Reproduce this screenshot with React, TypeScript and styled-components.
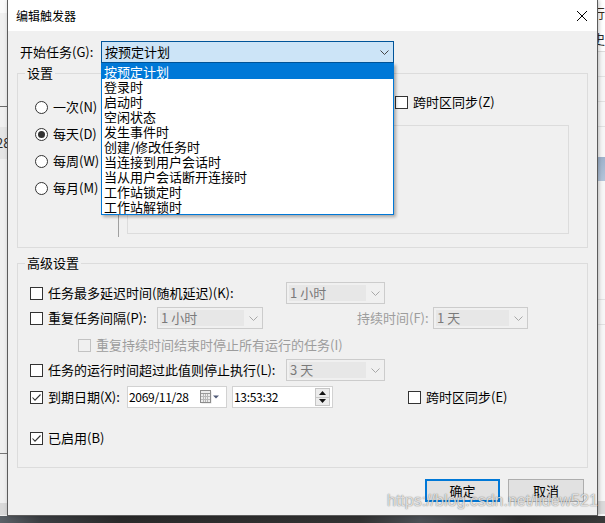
import React from "react";
import styled, { createGlobalStyle } from "styled-components";

const FONT = `"Noto Sans CJK SC", "Noto Sans", sans-serif`;

const GlobalStyle = createGlobalStyle`
  html, body { margin: 0; padding: 0; background: #2b2b2b; }
  body { font-family: ${FONT}; font-size: 13px; color: #000; }
  #root { width: 605px; height: 523px; }
  *, *::before, *::after { box-sizing: border-box; }
`;

const Desktop = styled.div`
  width: 605px;
  height: 523px;
  display: grid;
  grid-template-columns: 7px 591px 7px;
  grid-template-rows: 516px 7px;
  overflow: hidden;
  background: #2b2b2b;
`;

const SideStrip = styled.div<{ $side: "left" | "right" }>`
  grid-row: 1;
  grid-column: ${(p) => (p.$side === "left" ? 1 : 3)};
  display: flex;
  flex-direction: column;
  overflow: hidden;
  background: ${(p) => (p.$side === "left" ? "#f0f0f0" : "#f7f7f7")};
`;

const StripBand = styled.div<{ $h: number; $bg?: string; $line?: string }>`
  flex: 0 0 ${(p) => p.$h}px;
  background: ${(p) => p.$bg || "transparent"};
  border-bottom: ${(p) => (p.$line ? `1px solid ${p.$line}` : "none")};
  font-size: 13px;
  line-height: ${(p) => p.$h}px;
  white-space: nowrap;
  overflow: hidden;
`;

const Peek = styled.span<{ $shift: number; $color?: string }>`
  display: inline-block;
  margin-left: ${(p) => p.$shift}px;
  color: ${(p) => p.$color || "#2a2a2a"};
`;

const BottomStrip = styled.div`
  grid-row: 2;
  grid-column: 1 / -1;
  background: linear-gradient(
    90deg,
    #5b6167 0,
    #3b3e42 40px,
    #2a2a2a 120px,
    #323232 360px,
    #4c5055 420px,
    #2c2c2c 520px,
    #3a3a3a 605px
  );
`;

const Dialog = styled.div`
  grid-row: 1;
  grid-column: 2;
  position: relative;
  display: flex;
  flex-direction: column;
  background: #f0f0f0;
  border: 1px solid #5c5c5c;
  border-top: none;
  box-shadow: 1px 0 4px rgba(0, 0, 0, 0.25);
`;

const TitleBar = styled.div`
  flex: 0 0 31px;
  display: flex;
  align-items: center;
  justify-content: space-between;
  background: #fff;
  padding-left: 8px;
`;

const Title = styled.span`
  font-size: 12px;
  line-height: 16px;
`;

const CloseBtn = styled.span`
  display: flex;
  margin-right: 10px;
  margin-top: 1px;
`;

const Body = styled.div`
  flex: 1;
  display: flex;
  flex-direction: column;
  padding: 10px 9px 0;
`;

const StartRow = styled.div`
  position: relative;
  z-index: 2;
  display: flex;
  align-items: center;
  height: 22px;
  padding-left: 3px;
`;

const FieldLabel = styled.span<{ $w?: number; $disabled?: boolean; $ml?: number }>`
  flex: 0 0 ${(p) => (p.$w ? `${p.$w}px` : "auto")};
  margin-left: ${(p) => p.$ml || 0}px;
  white-space: nowrap;
  color: ${(p) => (p.$disabled ? "#9d9d9d" : "#000")};
  font-size: 13px;
  line-height: 16px;
`;

const ActiveCombo = styled.div`
  position: relative;
  width: 293px;
  height: 22px;
  display: flex;
  align-items: center;
  justify-content: space-between;
  padding: 0 4px 0 3px;
  background: #cce4f7;
  border: 1px solid #005499;
  font-size: 13px;
  line-height: 16px;
`;

const DropList = styled.ul`
  position: absolute;
  left: -1px;
  top: calc(100% + 1px);
  width: 293px;
  margin: 0;
  padding: 0;
  list-style: none;
  background: #fff;
  border: 1px solid #0078d7;
  box-shadow: 2px 2px 3px rgba(0, 0, 0, 0.3);
`;

const DropItem = styled.li<{ $selected?: boolean }>`
  height: 15px;
  line-height: 15px;
  padding-left: 2px;
  font-size: 13px;
  white-space: nowrap;
  background: ${(p) => (p.$selected ? "#0078d7" : "transparent")};
  color: ${(p) => (p.$selected ? "#fff" : "#000")};
`;

const Group = styled.fieldset<{ $mt: number }>`
  margin: ${(p) => p.$mt}px 0 0;
  padding: 0;
  min-width: 0;
  border: 1px solid #dcdcdc;
`;

const GroupLegend = styled.legend`
  margin-left: 7px;
  padding: 0 2px;
  font-size: 13px;
  line-height: 16px;
`;

const SettingsInner = styled.div`
  display: flex;
  align-items: flex-start;
`;

const RadioCol = styled.div`
  flex: 0 0 100px;
  display: flex;
  flex-direction: column;
  gap: 7px;
  padding: 16px 0 0 17px;
`;

const OptionRow = styled.label`
  display: flex;
  align-items: center;
  gap: 5px;
  height: 20px;
  font-size: 13px;
  line-height: 16px;
  white-space: nowrap;
`;

const RadioCircle = styled.span<{ $checked?: boolean }>`
  flex: 0 0 13px;
  width: 13px;
  height: 13px;
  border-radius: 50%;
  border: 1px solid #333;
  background: #fff;
  display: flex;
  align-items: center;
  justify-content: center;
  &::after {
    content: "";
    width: 7px;
    height: 7px;
    border-radius: 50%;
    background: ${(p) => (p.$checked ? "#333" : "transparent")};
  }
`;

const VLine = styled.div`
  flex: 0 0 1px;
  margin-top: 7px;
  height: 149px;
  background: #a0a0a0;
`;

const RightPanel = styled.div`
  flex: 0 0 442px;
  margin-left: 8px;
  display: flex;
  flex-direction: column;
  padding-bottom: 13px;
`;

const PanelTopRow = styled.div`
  margin-top: 11px;
  height: 20px;
  display: flex;
  align-items: center;
  padding-left: 268px;
`;

const InnerBox = styled.div`
  margin-top: 13px;
  height: 109px;
  border: 1px solid #dcdcdc;
`;

const AdvInner = styled.div`
  display: flex;
  flex-direction: column;
  padding: 11px 0 18px 12px;
`;

const Row = styled.div<{ $mt?: number; $indent?: number }>`
  display: flex;
  align-items: center;
  height: 22px;
  margin-top: ${(p) => p.$mt || 0}px;
  padding-left: ${(p) => p.$indent || 0}px;
`;

const CheckGroup = styled.label<{ $ml?: number; $w?: number }>`
  display: flex;
  align-items: center;
  gap: 5px;
  margin-left: ${(p) => p.$ml || 0}px;
  flex: 0 0 ${(p) => (p.$w ? `${p.$w}px` : "auto")};
  white-space: nowrap;
`;

const CheckBoxBox = styled.span<{ $disabled?: boolean }>`
  flex: 0 0 13px;
  width: 13px;
  height: 13px;
  border: 1px solid ${(p) => (p.$disabled ? "#c2c2c2" : "#333")};
  background: ${(p) => (p.$disabled ? "#f0f0f0" : "#fff")};
  display: flex;
  align-items: center;
  justify-content: center;
`;

const DimCombo = styled.div<{ $w: number; $ml?: number }>`
  flex: 0 0 ${(p) => p.$w}px;
  margin-left: ${(p) => p.$ml || 0}px;
  height: 22px;
  border: 1px solid #cccccc;
  background: #f0f0f0;
  display: flex;
  align-items: stretch;
`;

const DimComboText = styled.span`
  flex: 1;
  margin: 2px 0 2px 2px;
  background: #e7e7e7;
  color: #7a7a7a;
  padding-left: 1px;
  font-size: 13px;
  line-height: 16px;
  display: flex;
  align-items: center;
  white-space: nowrap;
`;

const DimChevronBox = styled.span`
  flex: 0 0 18px;
  display: flex;
  align-items: center;
  justify-content: center;
`;

const InputField = styled.div<{ $w: number; $ml?: number; $pr?: number }>`
  flex: 0 0 ${(p) => p.$w}px;
  margin-left: ${(p) => p.$ml || 0}px;
  height: 22px;
  background: #fff;
  border: 1px solid #d2d2d2;
  display: flex;
  align-items: center;
  justify-content: space-between;
  padding: 0 ${(p) => p.$pr ?? 2}px 0 1px;
  white-space: nowrap;
`;

const ValueText = styled.span`
  font-size: 12px;
  line-height: 16px;
  letter-spacing: -0.3px;
`;

const Spinner = styled.span`
  display: flex;
  flex-direction: column;
  width: 15px;
  height: 18px;
`;

const SpinHalf = styled.span`
  flex: 1;
  display: flex;
  align-items: center;
  justify-content: center;
  background: #ececec;
  border: 1px solid #c6c6c6;
  & + & {
    border-top: none;
  }
`;

const ButtonRow = styled.div`
  margin-top: 11px;
  display: flex;
  justify-content: flex-end;
  gap: 8px;
  padding-right: 4px;
`;

const DlgButton = styled.button<{ $w: number; $primary?: boolean }>`
  width: ${(p) => p.$w}px;
  height: 23px;
  padding: 0;
  background: #e1e1e1;
  border: ${(p) => (p.$primary ? "2px solid #0078d7" : "1px solid #adadad")};
  font-family: ${FONT};
  font-size: 13px;
  line-height: 16px;
  color: #000;
`;

const Watermark = styled.span`
  position: absolute;
  left: 379px;
  top: 492px;
  font-family: "Liberation Sans", Arial, sans-serif;
  font-size: 16px;
  line-height: 18px;
  color: rgba(250, 250, 250, 0.8);
  text-shadow: 0 0 1px rgba(0, 0, 0, 0.5), 0 0 2px rgba(0, 0, 0, 0.2);
  white-space: nowrap;
  pointer-events: none;
`;

const Chevron = ({ color }: { color: string }) => (
  <svg width="9" height="5" viewBox="0 0 9 5">
    <polyline points="0.5,0.5 4.5,4.5 8.5,0.5" fill="none" stroke={color} strokeWidth="1" />
  </svg>
);

const CheckMark = () => (
  <svg width="11" height="11" viewBox="0 0 11 11">
    <polyline points="1.5,5.5 4,8.2 9.5,2.5" fill="none" stroke="#333" strokeWidth="1.1" />
  </svg>
);

const CheckBox = ({ checked, disabled }: { checked?: boolean; disabled?: boolean }) => (
  <CheckBoxBox $disabled={disabled}>{checked ? <CheckMark /> : null}</CheckBoxBox>
);

const CalendarIcon = () => (
  <svg width="20" height="14" viewBox="0 0 20 14">
    <rect x="1.5" y="1.5" width="10" height="12" fill="#9a9a9a" opacity="0.35" />
    <rect x="0.5" y="0.5" width="10" height="12" fill="#ececec" stroke="#8c8c8c" />
    <line x1="1" y1="3.5" x2="10" y2="3.5" stroke="#9a9a9a" />
    <line x1="3.5" y1="4" x2="3.5" y2="12" stroke="#b8b8b8" />
    <line x1="5.5" y1="4" x2="5.5" y2="12" stroke="#b8b8b8" />
    <line x1="7.5" y1="4" x2="7.5" y2="12" stroke="#b8b8b8" />
    <line x1="1" y1="6.5" x2="10" y2="6.5" stroke="#b8b8b8" />
    <line x1="1" y1="9.5" x2="10" y2="9.5" stroke="#b8b8b8" />
    <polygon points="13,5.5 19,5.5 16,8.5" fill="#505a77" />
  </svg>
);

const SpinArrow = ({ up }: { up?: boolean }) => (
  <svg width="7" height="4" viewBox="0 0 7 4">
    <polygon points={up ? "0,4 7,4 3.5,0" : "0,0 7,0 3.5,4"} fill="#111" />
  </svg>
);

const triggerItems = [
  "按预定计划",
  "登录时",
  "启动时",
  "空闲状态",
  "发生事件时",
  "创建/修改任务时",
  "当连接到用户会话时",
  "当从用户会话断开连接时",
  "工作站锁定时",
  "工作站解锁时",
];

const radios = [
  { label: "一次(N)", checked: false },
  { label: "每天(D)", checked: true },
  { label: "每周(W)", checked: false },
  { label: "每月(M)", checked: false },
];

export default function App() {
  return (
    <>
      <GlobalStyle />
      <Desktop>
        <SideStrip $side="left">
          <StripBand $h={13} $bg="#fafafa" />
          <StripBand $h={94} $line="#6b6b6b" />
          <StripBand $h={20} />
          <StripBand $h={32} $bg="#e5e5e5">
            <Peek $shift={-4}>28</Peek>
          </StripBand>
          <StripBand $h={295} $line="#777777" />
          <StripBand $h={49} />
          <StripBand $h={12} $bg="#d9d9d9" />
        </SideStrip>

        <Dialog>
          <TitleBar>
            <Title>编辑触发器</Title>
            <CloseBtn>
              <svg width="10" height="10" viewBox="0 0 10 10">
                <line x1="0" y1="0" x2="10" y2="10" stroke="#000" strokeWidth="1" />
                <line x1="10" y1="0" x2="0" y2="10" stroke="#000" strokeWidth="1" />
              </svg>
            </CloseBtn>
          </TitleBar>

          <Body>
            <StartRow>
              <FieldLabel $w={81}>开始任务(G):</FieldLabel>
              <ActiveCombo>
                <span>按预定计划</span>
                <Chevron color="#444" />
                <DropList>
                  {triggerItems.map((t, i) => (
                    <DropItem key={t} $selected={i === 0}>
                      {t}
                    </DropItem>
                  ))}
                </DropList>
              </ActiveCombo>
            </StartRow>

            <Group $mt={2}>
              <GroupLegend>设置</GroupLegend>
              <SettingsInner>
                <RadioCol>
                  {radios.map((r) => (
                    <OptionRow key={r.label}>
                      <RadioCircle $checked={r.checked} />
                      {r.label}
                    </OptionRow>
                  ))}
                </RadioCol>
                <VLine />
                <RightPanel>
                  <PanelTopRow>
                    <CheckGroup>
                      <CheckBox />
                      <FieldLabel>跨时区同步(Z)</FieldLabel>
                    </CheckGroup>
                  </PanelTopRow>
                  <InnerBox />
                </RightPanel>
              </SettingsInner>
            </Group>

            <Group $mt={7}>
              <GroupLegend>高级设置</GroupLegend>
              <AdvInner>
                <Row>
                  <CheckGroup $w={256}>
                    <CheckBox />
                    <FieldLabel>任务最多延迟时间(随机延迟)(K):</FieldLabel>
                  </CheckGroup>
                  <DimCombo $w={99}>
                    <DimComboText>1 小时</DimComboText>
                    <DimChevronBox>
                      <Chevron color="#a8a8a8" />
                    </DimChevronBox>
                  </DimCombo>
                </Row>

                <Row $mt={3}>
                  <CheckGroup $w={127}>
                    <CheckBox />
                    <FieldLabel>重复任务间隔(P):</FieldLabel>
                  </CheckGroup>
                  <DimCombo $w={106}>
                    <DimComboText>1 小时</DimComboText>
                    <DimChevronBox>
                      <Chevron color="#a8a8a8" />
                    </DimChevronBox>
                  </DimCombo>
                  <FieldLabel $w={76} $ml={94} $disabled>
                    持续时间(F):
                  </FieldLabel>
                  <DimCombo $w={95}>
                    <DimComboText>1 天</DimComboText>
                    <DimChevronBox>
                      <Chevron color="#a8a8a8" />
                    </DimChevronBox>
                  </DimCombo>
                </Row>

                <Row $mt={5} $indent={48}>
                  <CheckGroup>
                    <CheckBox disabled />
                    <FieldLabel $disabled>重复持续时间结束时停止所有运行的任务(I)</FieldLabel>
                  </CheckGroup>
                </Row>

                <Row $mt={3}>
                  <CheckGroup $w={256}>
                    <CheckBox />
                    <FieldLabel>任务的运行时间超过此值则停止执行(L):</FieldLabel>
                  </CheckGroup>
                  <DimCombo $w={99}>
                    <DimComboText>3 天</DimComboText>
                    <DimChevronBox>
                      <Chevron color="#a8a8a8" />
                    </DimChevronBox>
                  </DimCombo>
                </Row>

                <Row $mt={5}>
                  <CheckGroup $w={97}>
                    <CheckBox checked />
                    <FieldLabel>到期日期(X):</FieldLabel>
                  </CheckGroup>
                  <InputField $w={100} $pr={6}>
                    <ValueText>2069/11/28</ValueText>
                    <CalendarIcon />
                  </InputField>
                  <InputField $w={101} $ml={5}>
                    <ValueText>13:53:32</ValueText>
                    <Spinner>
                      <SpinHalf>
                        <SpinArrow up />
                      </SpinHalf>
                      <SpinHalf>
                        <SpinArrow />
                      </SpinHalf>
                    </Spinner>
                  </InputField>
                  <CheckGroup $ml={75}>
                    <CheckBox />
                    <FieldLabel>跨时区同步(E)</FieldLabel>
                  </CheckGroup>
                </Row>

                <Row $mt={19}>
                  <CheckGroup>
                    <CheckBox checked />
                    <FieldLabel>已启用(B)</FieldLabel>
                  </CheckGroup>
                </Row>
              </AdvInner>
            </Group>

            <ButtonRow>
              <DlgButton $w={75} $primary>
                确定
              </DlgButton>
              <DlgButton $w={76}>取消</DlgButton>
            </ButtonRow>
          </Body>
          <Watermark>https://blog.csdn.net/lidew521</Watermark>
        </Dialog>

        <SideStrip $side="right">
          <StripBand $h={26} $bg="#ffffff">
            <Peek $shift={-6} $color="#3a2a1a">行</Peek>
          </StripBand>
          <StripBand $h={26} $bg="#ffffff" $line="#dcdcdc">
            <Peek $shift={-6}>史</Peek>
          </StripBand>
          <StripBand $h={25} $line="#e2e2e2" />
          <StripBand $h={25} $line="#e2e2e2" />
          <StripBand $h={25} $line="#e2e2e2" />
          <StripBand $h={30} />
          <StripBand $h={24} $bg="linear-gradient(180deg, #9fb3cc, #b4c5da)" />
          <StripBand $h={119} $line="#e2e2e2" />
          <StripBand $h={25} $line="#e2e2e2" />
          <StripBand $h={176} />
          <StripBand $h={13} $bg="#dadada" />
        </SideStrip>

        <BottomStrip />
      </Desktop>
    </>
  );
}
